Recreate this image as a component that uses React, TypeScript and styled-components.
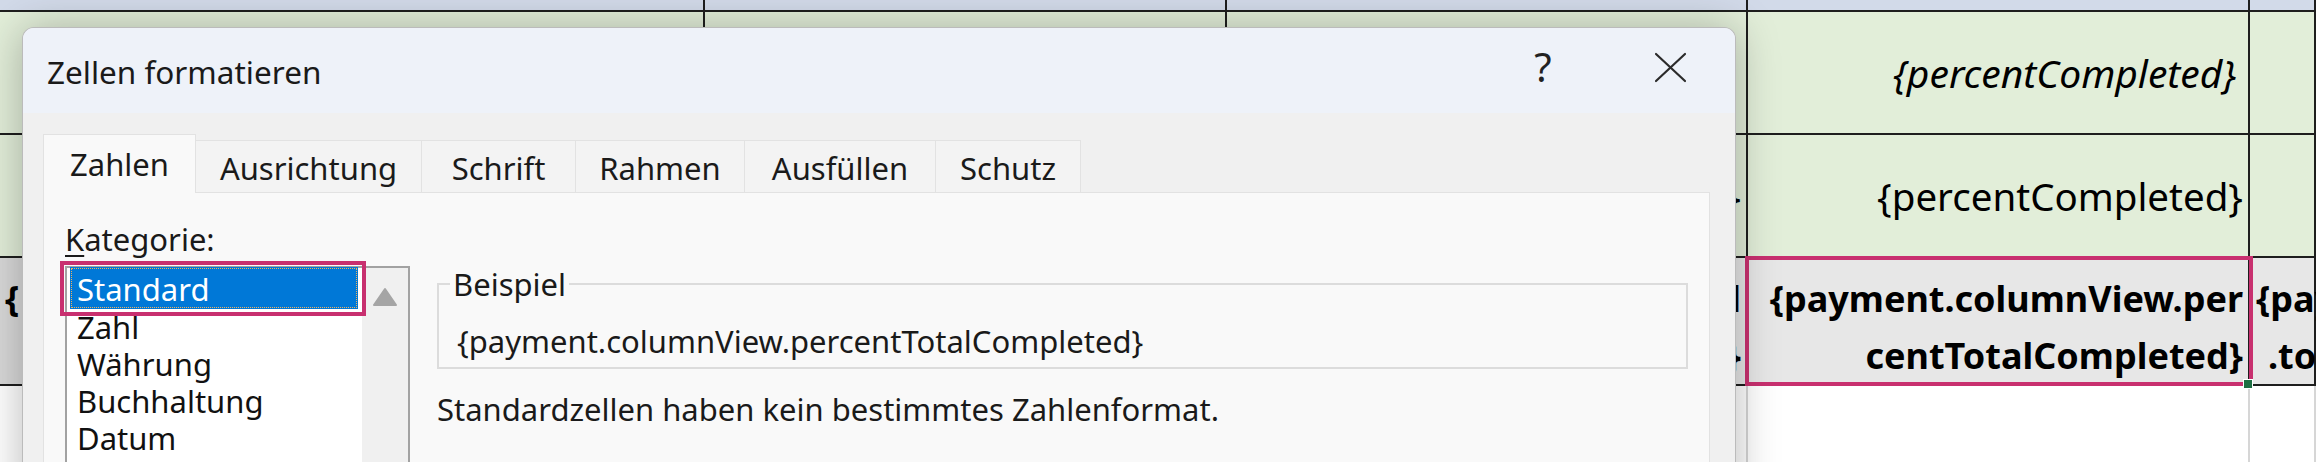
import React from 'react';
import styled, { createGlobalStyle } from 'styled-components';

const GlobalStyle = createGlobalStyle`
  html, body { margin: 0; padding: 0; background: #fff; }
  body { width: 2316px; height: 462px; overflow: hidden; }
  #root { width: 2316px; height: 462px; }
`;

const Screen = styled.div`
  position: relative;
  width: 2316px;
  height: 462px;
  overflow: hidden;
  background: #fff;
`;

/* ---------- spreadsheet ---------- */

const Sheet = styled.div`
  display: grid;
  grid-template-columns: 705px 522px 521px 502px 1fr;
  grid-template-rows: 12px 123px 123px 128px 1fr;
  height: 100%;
  font-family: "Noto Sans", "DejaVu Sans", sans-serif;
  color: #000;
`;

type CellProps = {
  $bg: string;
  $light?: boolean;
  $align?: 'left' | 'right';
  $valign?: 'center' | 'end';
  $pl?: number;
  $pr?: number;
};

const Cell = styled.div<CellProps>`
  position: relative;
  min-width: 0;
  background: ${(p) => p.$bg};
  border-right: 2px solid ${(p) => (p.$light ? '#d6d6d6' : '#1e1e1e')};
  border-bottom: ${(p) => (p.$light ? '0' : '2px solid #1e1e1e')};
  display: flex;
  flex-direction: column;
  justify-content: ${(p) => (p.$valign === 'end' ? 'flex-end' : 'center')};
  align-items: ${(p) => (p.$align === 'left' ? 'flex-start' : 'flex-end')};
  padding-left: ${(p) => p.$pl ?? 5}px;
  padding-right: ${(p) => p.$pr ?? 5}px;
`;

const CellLine = styled.span<{ $italic?: boolean; $bold?: boolean; $indent?: number }>`
  display: block;
  white-space: nowrap;
  font-size: ${(p) => (p.$bold ? 36 : p.$italic ? 39 : 38.5)}px;
  font-weight: ${(p) => (p.$bold ? 700 : 400)};
  font-style: ${(p) => (p.$italic ? 'italic' : 'normal')};
  line-height: ${(p) => (p.$bold ? 57 : 50)}px;
  padding-left: ${(p) => p.$indent ?? 0}px;
`;

const Selection = styled.div`
  position: absolute;
  left: -3px;
  right: -5px;
  top: -2px;
  bottom: -2px;
  border: 4px solid #c8306f;
  z-index: 2;
  pointer-events: none;
`;

const FillHandle = styled.div`
  position: absolute;
  right: -5px;
  bottom: -5px;
  width: 8px;
  height: 8px;
  background: #1e6e43;
  border: 1px solid #fff;
  z-index: 3;
`;

/* ---------- dialog ---------- */

const Dialog = styled.div`
  position: absolute;
  left: 22px;
  top: 27px;
  width: 1714px;
  height: 480px;
  box-sizing: border-box;
  border: 1px solid rgba(0, 0, 0, 0.22);
  border-radius: 12px 12px 0 0;
  background: #f0f0f0;
  box-shadow: 0 2px 44px rgba(0, 0, 0, 0.28);
  z-index: 5;
  display: flex;
  flex-direction: column;
  font-family: "Noto Sans", "DejaVu Sans", sans-serif;
  color: #1a1a1a;
`;

const TitleBar = styled.div`
  height: 85px;
  flex: none;
  display: flex;
  align-items: center;
  padding-left: 24px;
  background: #eef2f9;
  border-radius: 11px 11px 0 0;
`;

const Title = styled.div`
  flex: 1;
  font-size: 31.5px;
  padding-top: 2px;
`;

const HelpButton = styled.div`
  width: 80px;
  text-align: center;
  font-size: 40px;
  color: #222;
  padding-bottom: 8px;
`;

const CloseButton = styled.div`
  width: 100px;
  margin-left: 37px;
  margin-right: 15px;
  display: flex;
  justify-content: center;
  padding-bottom: 6px;
`;

const Body = styled.div`
  flex: 1;
  display: flex;
  flex-direction: column;
  padding: 22px 25px 0 20px;
`;

const TabRow = styled.div`
  display: flex;
  align-items: flex-end;
  height: 58px;
  margin-bottom: -1px;
  position: relative;
  z-index: 1;
`;

const Tab = styled.div<{ $w: number; $active?: boolean }>`
  width: ${(p) => p.$w}px;
  height: ${(p) => (p.$active ? 59 : 53)}px;
  box-sizing: border-box;
  margin-right: -1px;
  display: flex;
  align-items: center;
  justify-content: center;
  font-size: 31px;
  background: ${(p) => (p.$active ? '#f9f9f9' : '#f3f3f3')};
  border: 1px solid #e2e2e2;
  border-bottom: ${(p) => (p.$active ? 'none' : '1px solid #e2e2e2')};
  padding-top: ${(p) => (p.$active ? 0 : 2)}px;
`;

const Panel = styled.div`
  flex: 1;
  background: #f9f9f9;
  border: 1px solid #e2e2e2;
  padding: 26px 21px 0 21px;
`;

const Label = styled.div`
  font-size: 31px;
  line-height: 40px;
  u {
    text-decoration-thickness: 2px;
    text-underline-offset: 4px;
  }
`;

const ContentRow = styled.div`
  display: flex;
  margin-top: 7px;
`;

const ListBox = styled.div`
  width: 345px;
  height: 240px;
  box-sizing: border-box;
  flex: none;
  border: 2px solid #a2a2a2;
  background: #fff;
  display: flex;
`;

const ListItems = styled.div`
  flex: 1;
  padding: 0 4px 0 3px;
`;

const ListItem = styled.div<{ $selected?: boolean }>`
  position: relative;
  height: ${(p) => (p.$selected ? 42 : 37)}px;
  line-height: ${(p) => (p.$selected ? 44 : 37)}px;
  padding-left: 7px;
  font-size: 31px;
  color: ${(p) => (p.$selected ? '#fff' : '#111')};
  background: ${(p) => (p.$selected ? '#0078d7' : 'transparent')};
  outline: ${(p) => (p.$selected ? '1px dotted #f3b15a' : 'none')};
  outline-offset: -2px;
  margin-top: ${(p) => (p.$selected ? -1 : 0)}px;
`;

const Annotation = styled.div`
  position: absolute;
  left: -10px;
  right: -8px;
  top: -6px;
  bottom: -7px;
  border: 4px solid #c8306f;
  pointer-events: none;
`;

const ScrollBar = styled.div`
  width: 46px;
  flex: none;
  background: #f0f0f0;
  display: flex;
  justify-content: center;
  padding-top: 19px;
  box-sizing: border-box;
`;

const Details = styled.div`
  flex: 1;
  margin-left: 27px;
  min-width: 0;
`;

const GroupBox = styled.fieldset`
  margin: 3px 0 0;
  min-width: 0;
  border: 2px solid #dcdcdc;
  padding: 0 11px 6px;
`;

const GroupLegend = styled.legend`
  font-size: 31px;
  line-height: 30px;
  padding: 0 3px;
`;

const SampleText = styled.div`
  margin-top: 22px;
  padding-left: 7px;
  font-size: 31px;
  line-height: 40px;
  white-space: nowrap;
`;

const Description = styled.div`
  margin-top: 20px;
  font-size: 31px;
  line-height: 40px;
  white-space: nowrap;
`;

const GREEN = '#e2eed9';
const BLUE = '#d2dae9';
const GRAY = '#e7e7e7';
const WHITE = '#ffffff';

const tabs = [
  { label: 'Zahlen', w: 153, active: true },
  { label: 'Ausrichtung', w: 227 },
  { label: 'Schrift', w: 155 },
  { label: 'Rahmen', w: 170 },
  { label: 'Ausfüllen', w: 192 },
  { label: 'Schutz', w: 146 },
];

const categories = ['Standard', 'Zahl', 'Währung', 'Buchhaltung', 'Datum'];

export default function App() {
  return (
    <Screen>
      <GlobalStyle />
      <Sheet>
        {/* row 0 */}
        {[0, 1, 2, 3, 4].map((i) => (
          <Cell key={`r0-${i}`} $bg={BLUE} />
        ))}

        {/* row 1 */}
        <Cell $bg={GREEN} />
        <Cell $bg={GREEN} />
        <Cell $bg={GREEN} />
        <Cell $bg={GREEN} $pr={12}>
          <CellLine $italic>{'{percentCompleted}'}</CellLine>
        </Cell>
        <Cell $bg={GREEN} />

        {/* row 2 */}
        <Cell $bg={GREEN} />
        <Cell $bg={GREEN} />
        <Cell $bg={GREEN}>
          <CellLine>{'{percentCompleted}'}</CellLine>
        </Cell>
        <Cell $bg={GREEN}>
          <CellLine>{'{percentCompleted}'}</CellLine>
        </Cell>
        <Cell $bg={GREEN} />

        {/* row 3 */}
        <Cell $bg={'#d9d9d9'} $align="left" $valign="end" $pl={5}>
          <CellLine $bold>{'{ payment.columnView'}</CellLine>
          <CellLine $bold $indent={40}>{'.percentCompleted}'}</CellLine>
        </Cell>
        <Cell $bg={GRAY} />
        <Cell $bg={GRAY} $valign="end">
          <CellLine $bold>{'{payment.columnView.total'}</CellLine>
          <CellLine $bold>{'Completed}'}</CellLine>
        </Cell>
        <Cell $bg={GRAY} $valign="end">
          <CellLine $bold>{'{payment.columnView.per'}</CellLine>
          <CellLine $bold>{'centTotalCompleted}'}</CellLine>
          <Selection />
          <FillHandle />
        </Cell>
        <Cell $bg={GRAY} $align="left" $valign="end" $pl={6}>
          <CellLine $bold>{'{payment.columnView'}</CellLine>
          <CellLine $bold $indent={12}>{'.totalCompleted}'}</CellLine>
        </Cell>

        {/* row 4 */}
        {[0, 1, 2, 3, 4].map((i) => (
          <Cell key={`r4-${i}`} $bg={WHITE} $light />
        ))}
      </Sheet>

      <Dialog>
        <TitleBar>
          <Title>Zellen formatieren</Title>
          <HelpButton>?</HelpButton>
          <CloseButton>
            <svg width="33" height="31" viewBox="0 0 33 31">
              <path d="M2 2 L31 29 M31 2 L2 29" stroke="#2b2b2b" strokeWidth="2.2" strokeLinecap="round" fill="none" />
            </svg>
          </CloseButton>
        </TitleBar>

        <Body>
          <TabRow>
            {tabs.map((t) => (
              <Tab key={t.label} $w={t.w} $active={t.active}>
                {t.label}
              </Tab>
            ))}
          </TabRow>

          <Panel>
            <Label>
              <u>K</u>ategorie:
            </Label>
            <ContentRow>
              <ListBox>
                <ListItems>
                  {categories.map((c, i) => (
                    <ListItem key={c} $selected={i === 0}>
                      {c}
                      {i === 0 && <Annotation />}
                    </ListItem>
                  ))}
                </ListItems>
                <ScrollBar>
                  <svg width="26" height="20" viewBox="0 0 26 20">
                    <path d="M13 2 L24 18 L2 18 Z" fill="#a5a5a5" stroke="#a5a5a5" strokeWidth="2" strokeLinejoin="round" />
                  </svg>
                </ScrollBar>
              </ListBox>

              <Details>
                <GroupBox>
                  <GroupLegend>Beispiel</GroupLegend>
                  <SampleText>{'{payment.columnView.percentTotalCompleted}'}</SampleText>
                </GroupBox>
                <Description>Standardzellen haben kein bestimmtes Zahlenformat.</Description>
              </Details>
            </ContentRow>
          </Panel>
        </Body>
      </Dialog>
    </Screen>
  );
}
